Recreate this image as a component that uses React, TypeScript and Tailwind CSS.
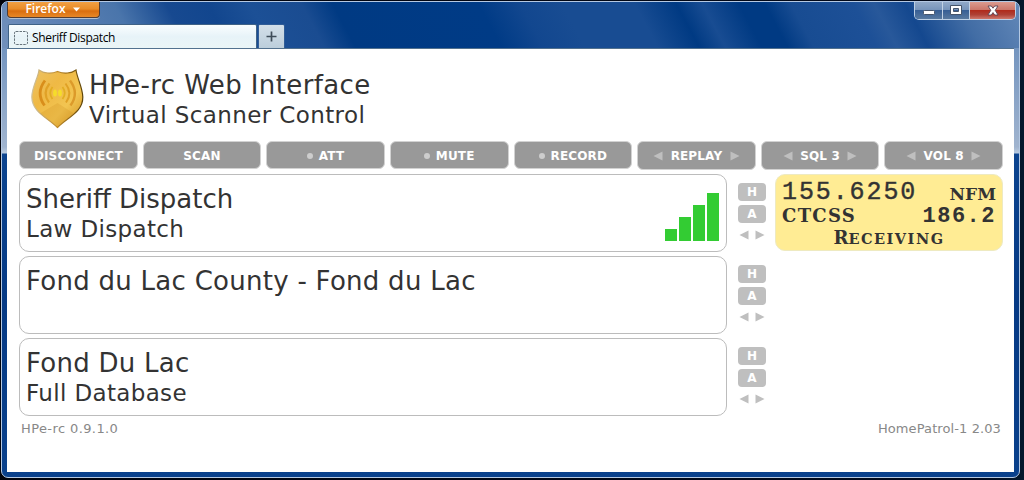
import type { ReactNode } from "react";

function Shield() {
  return (
    <svg width="56" height="62" viewBox="0 0 56 62" className="shrink-0">
      <defs>
        <linearGradient id="gold" x1="0" y1="0" x2="1" y2="1">
          <stop offset="0" stopColor="#ecc266" />
          <stop offset=".35" stopColor="#efb945" />
          <stop offset=".65" stopColor="#f2c552" />
          <stop offset="1" stopColor="#cf8e1c" />
        </linearGradient>
        <linearGradient id="rim" x1="0" y1="0" x2="1" y2="0">
          <stop offset="0" stopColor="#cfc3a0" />
          <stop offset=".5" stopColor="#c08a28" />
          <stop offset="1" stopColor="#5c4308" />
        </linearGradient>
      </defs>
      <path d="M11 3C15.500 6.500 23 7 29.500 4.500C36 7 43.500 6.500 48 3C49 11 54.500 20 54.800 30C55 45 40 50 29.500 60.500C19 50 4 45 3.800 30C4 20 10 11 11 3Z" fill="url(#gold)" stroke="url(#rim)" strokeWidth="1.200" />
      <path d="M29.500 36L46 46.500Q39 51 29.500 59.500Q20 51 12 46.500Z" fill="#c98a1c" opacity=".22" />
      <g fill="none" strokeLinecap="butt">
        <path d="M17 13.500Q7.500 26 16.500 38.500" stroke="#d98e1b" strokeWidth="2.800" />
        <path d="M21.500 16.500Q14 26 21 35.500" stroke="#e0a126" strokeWidth="2.200" />
        <path d="M24.500 20Q20 26 24.500 32" stroke="#e2ad22" strokeWidth="1.800" />
        <path d="M42 13.500Q51.500 26 42.500 38.500" stroke="#dc9a2a" strokeWidth="2.400" />
        <path d="M37.500 16.500Q45 26 38 35.500" stroke="#e0a126" strokeWidth="2" />
        <path d="M34.500 20Q39 26 34.500 32" stroke="#e2ad22" strokeWidth="1.800" />
      </g>
      <ellipse cx="27" cy="26" rx="1.900" ry="3.500" fill="#f6dc2a" />
      <ellipse cx="32" cy="26" rx="1.900" ry="3.500" fill="#f6dc2a" />
    </svg>
  );
}

function Arrow({ right = false }: { right?: boolean }) {
  return (
    <svg width="10" height="10" viewBox="0 0 10 10" className="shrink-0">
      <path d={right ? "M.5 .5L9.500 5L.5 9.500Z" : "M9.500 .5L.5 5L9.500 9.500Z"} fill="#bfbfbf" />
    </svg>
  );
}

function Dot() {
  return <span className="mr-[6px] size-[6px] shrink-0 rounded-full bg-[#cdcdcd]" />;
}

function Button({ children, tall = false }: { children: ReactNode; tall?: boolean }) {
  return (
    <button
      className={`flex items-center justify-center rounded-[6px] border border-[#d2d2d2] bg-[#999] text-[12px] leading-[14px] font-bold tracking-[0.15px] whitespace-nowrap text-white ${
        tall ? "h-[29px]" : "h-[28px] pt-px"
      }`}
    >
      {children}
    </button>
  );
}

function Stepper({ label }: { label: string }) {
  return (
    <Button tall>
      <Arrow />
      <span className="mx-[7.500px]">{label}</span>
      <Arrow right />
    </Button>
  );
}

function Row({ title, sub, signal = false }: { title: string; sub?: string; signal?: boolean }) {
  return (
    <div className="flex h-[78px]">
      <div className="flex w-[708px] justify-between rounded-[10px] border border-[#bcbcbc] pr-[7px] pl-[6px]">
        <div className="pt-[9px] whitespace-nowrap">
          <div className={`text-[26px] leading-[30px] ${signal ? "tracking-[0px]" : "tracking-[0.27px]"}`}>{title}</div>
          {sub && <div className="text-[23px] leading-[30px] tracking-[0.35px]">{sub}</div>}
        </div>
        {signal && (
          <div className="flex items-end gap-[2px] pb-[10px]">
            <div className="h-[12px] w-[12px] bg-[#33cc33]" />
            <div className="h-[24px] w-[12px] bg-[#33cc33]" />
            <div className="h-[36px] w-[12px] bg-[#33cc33]" />
            <div className="h-[48px] w-[12px] bg-[#33cc33]" />
          </div>
        )}
      </div>
      <div className="ml-[11px] flex w-[28px] flex-col gap-[4px] pt-[9px] text-[12px] leading-[18px] font-bold text-white">
        <button className="h-[18px] rounded-[4px] bg-[#bfbfbf]">H</button>
        <button className="h-[18px] rounded-[4px] bg-[#bfbfbf]">A</button>
        <div className="flex justify-between px-[1px] pt-[3px]">
          <Arrow />
          <Arrow right />
        </div>
      </div>
    </div>
  );
}

export default function App() {
  return (
    <div className="h-[480px] w-[1024px] bg-[linear-gradient(to_right,#01030b,#020a1c_96%,#04182c)] pt-px pr-[4px] pb-[2px] pl-px font-['DejaVu_Sans',sans-serif] text-[#333]">
      <div className="flex h-[477px] flex-col rounded-[7px] border border-[#b4c8e2] bg-[linear-gradient(to_bottom,#5f86b8_0,#a0b4cf_145px,#b9cbe0_151px,#0c448f_152px,#063a85_300px,#0a418c_100%)] pr-[5px] pb-[5px] pl-[5px]">
        <header className="-mx-[5px] flex h-[46px] shrink-0 flex-col rounded-t-[6px] bg-[linear-gradient(62deg,#7190bb_0,#5c80b3_7%,#4a75ab_13%,#174990_18%,#12468e_22%,#1c5096_26%,#1a4c91_31%,#003a83_34%,#003b86_48%,#12478f_52%,#184c92_56%,#184c92_63%,#003a83_67%,#184c92_69.500%,#003a83_73%,#003a83_75.500%,#184c92_78%,#1d5097_84%,#28589a_86%,#14488f_89%,#426da5_94%,#6388b8_100%)] pr-[3px] pl-[5px]">
          <div className="flex justify-between">
            <div className="flex h-[16px] w-[93px] items-center justify-center gap-[7px] rounded-b-[4px] border border-t-0 border-[#503e38] bg-[linear-gradient(#f1a044,#e98d29_45%,#d96e10_60%,#e88827)] pr-[2px] pb-[1px] font-['Open_Sans',sans-serif] text-[12px] leading-[14px] font-semibold text-white [box-shadow:0_1px_0_#b1bed0]">
              Firefox
              <svg width="7" height="5" viewBox="0 0 7 5"><path d="M0 .5H7L3.500 4.500Z" fill="white" /></svg>
            </div>
            <div className="flex h-[18px] w-[102px] overflow-hidden rounded-b-[5px] border border-t-0 border-[#bdd0e5]">
              <div className="flex w-[28px] items-center justify-center border-r border-[#c2d2e4] bg-[linear-gradient(#91a9c8,#7895bb_45%,#375f95_50%,#58799f)]">
                <svg width="12" height="11" viewBox="0 0 12 11"><rect x=".5" y="5.500" width="11" height="4" rx="1" fill="white" stroke="#46556a" /></svg>
              </div>
              <div className="flex w-[27px] items-center justify-center border-r border-[#c2d2e4] bg-[linear-gradient(#91a9c8,#7895bb_45%,#375f95_50%,#58799f)]">
                <svg width="12" height="11" viewBox="0 0 12 11"><path d="M.5 .5H11.500V9.500H.5Z M3.500 3.500V6.500H8.500V3.500Z" fill="white" fillRule="evenodd" stroke="#46556a" /></svg>
              </div>
              <div className="flex grow items-center justify-center bg-[linear-gradient(#dc9b8f,#cc776a_45%,#b02b1c_50%,#ae4136_75%,#cf776b)]">
                <svg width="12" height="11" viewBox="0 0 12 11"><path d="M1 1H4.300L6 3.200L7.700 1H11L8.200 5.300L11 10H7.700L6 7.600L4.300 10H1L3.800 5.300Z" fill="white" stroke="#594454" strokeWidth=".9" /></svg>
              </div>
            </div>
          </div>
          <div className="mt-auto flex h-[24px] gap-px pl-[1px] font-['Open_Sans',sans-serif] text-[12px] text-black">
            <div className="flex w-[249px] items-center gap-[4px] rounded-t-[2px] border border-b-0 border-[#3f6286] bg-[linear-gradient(#f9fdfe,#e7f3f8_50%,#eaf5f6)] pt-[2px] pl-[5px] leading-[20px]">
              <svg width="14" height="14" viewBox="0 0 14 14"><rect x=".5" y=".5" width="13" height="13" rx="1.500" fill="none" stroke="#66737b" strokeDasharray="2.500 1" /></svg>
              <span className="tracking-[-0.35px]">Sheriff Dispatch</span>
            </div>
            <div className="flex w-[27px] items-center justify-center rounded-t-[2px] border border-b-0 border-[#315d97] bg-[linear-gradient(#d3dfe9,#bccedb)]">
              <svg width="11" height="11" viewBox="0 0 11 11"><path d="M5.500 .5V10.500M.5 5.500H10.500" stroke="#3e4c59" strokeWidth="1.700" /></svg>
            </div>
          </div>
        </header>
        <main className="h-[424px] shrink-0 border-t border-[#52718e] bg-white pr-[11px] pl-[12px]">
          <div className="flex h-[92px] pt-[18px] pl-[9px]">
            <Shield />
            <div className="ml-[5px] pt-[3px] whitespace-nowrap">
              <h1 className="text-[26px] leading-[30px] tracking-[0.4px]">HPe-rc Web Interface</h1>
              <div className="text-[23px] leading-[30px] tracking-[0.4px]">Virtual Scanner Control</div>
            </div>
          </div>
          <nav className="grid h-[33px] grid-cols-8 gap-[5px]">
            <Button>DISCONNECT</Button>
            <Button>SCAN</Button>
            <Button><Dot />ATT</Button>
            <Button><Dot />MUTE</Button>
            <Button><Dot />RECORD</Button>
            <Stepper label="REPLAY" />
            <Stepper label="SQL 3" />
            <Stepper label="VOL 8" />
          </nav>
          <div className="flex justify-between">
            <div className="flex flex-col gap-[4px]">
              <Row title="Sheriff Dispatch" sub="Law Dispatch" signal />
              <Row title="Fond du Lac County - Fond du Lac" />
              <Row title="Fond Du Lac" sub="Full Database" />
            </div>
            <div className="flex h-[77px] w-[228px] flex-col rounded-[10px] border border-[#eeeac1] bg-[#ffec94] px-[6px] pt-[4px] font-['Liberation_Mono',monospace]">
              <div className="flex h-[26px] items-start justify-between">
                <span className="text-[25px] leading-[27px] tracking-[1.900px] [-webkit-text-stroke:0.4px_#333]">155.6250</span>
                <span className="pt-[5px] font-['DejaVu_Serif',serif] text-[17px] leading-[20px] font-bold">NFM</span>
              </div>
              <div className="flex h-[23px] items-baseline justify-between leading-[22px]">
                <span className="font-['DejaVu_Serif',serif] text-[18px] font-semibold tracking-[1.300px]">CTCSS</span>
                <span className="text-[22px] font-bold tracking-[1.500px]">186.2</span>
              </div>
              <div className="flex h-[22px] items-baseline justify-center font-['DejaVu_Serif',serif] font-semibold">
                <span className="text-[18px] leading-[20px]">R</span>
                <span className="text-[14.500px] leading-[20px] tracking-[1.500px]">ECEIVING</span>
              </div>
            </div>
          </div>
          <footer className="flex justify-between pt-[4px] pr-[2px] pl-[2px] text-[13px] leading-[18px] text-[#888]">
            <span className="tracking-[0.4px]">HPe-rc 0.9.1.0</span>
            <span className="tracking-[0.1px]">HomePatrol-1 2.03</span>
          </footer>
        </main>
      </div>
    </div>
  );
}
